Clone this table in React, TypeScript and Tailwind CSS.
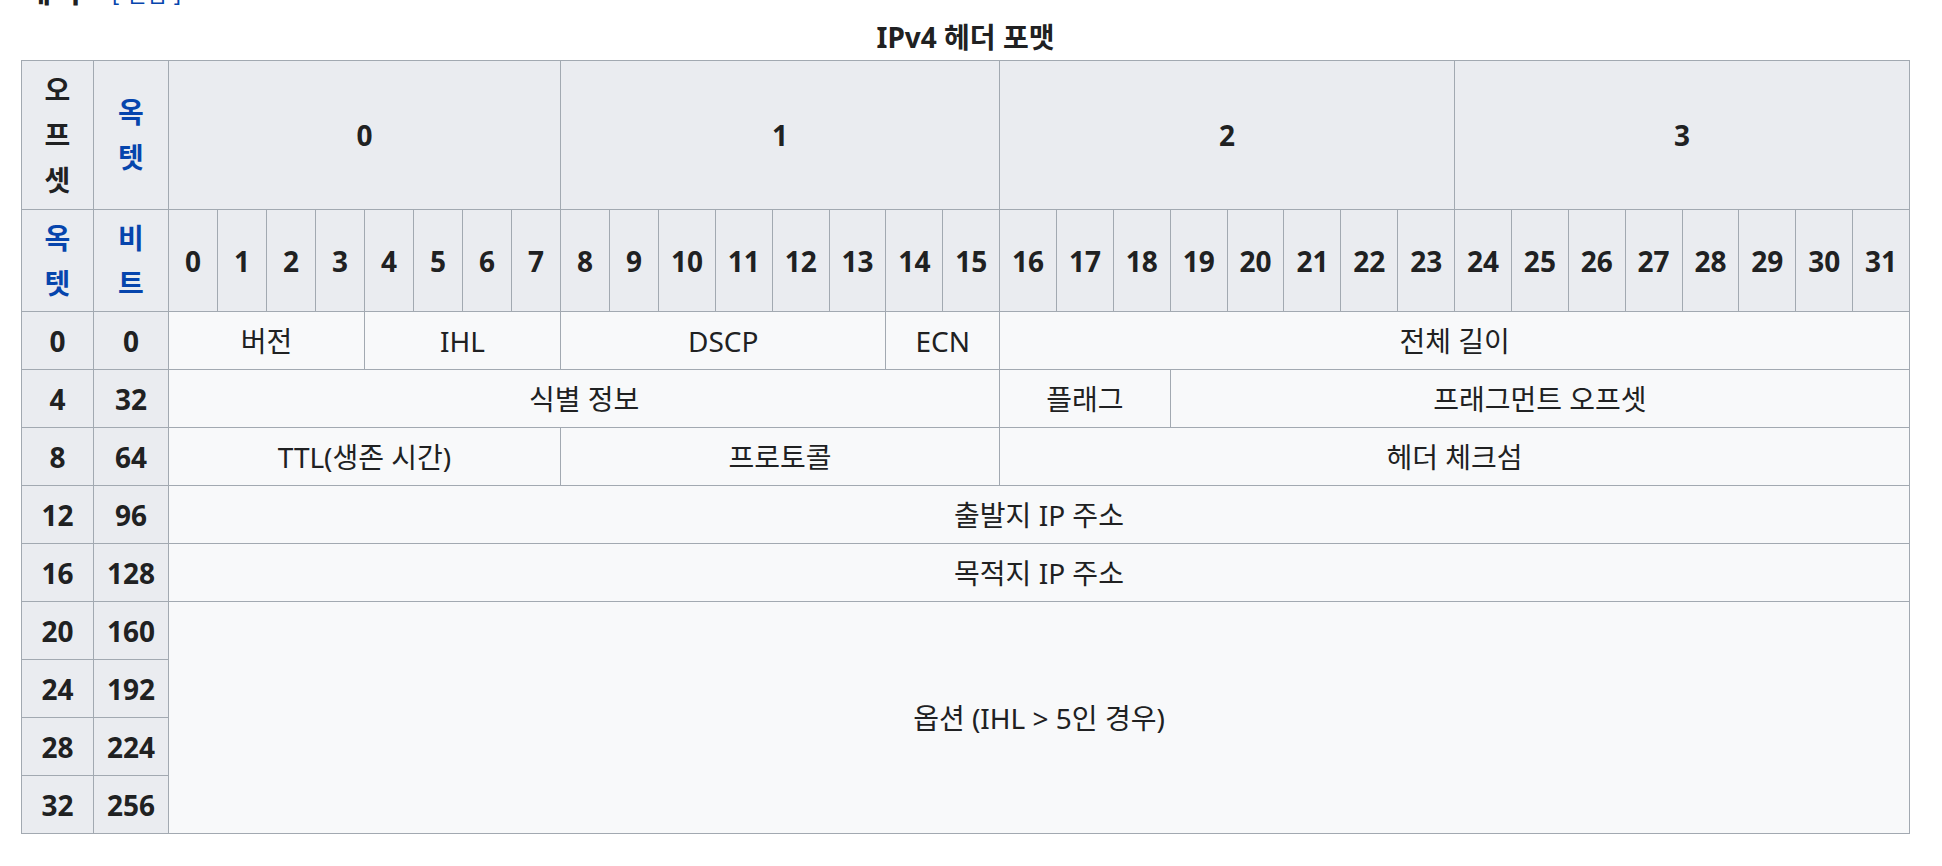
const FONT = "font-['Noto_Sans','Noto_Sans_CJK_KR',sans-serif]";

type Field = { label: string; span: string };

const dataRows: { octet: string; bit: string; fields: Field[] }[] = [
  {
    octet: "0",
    bit: "0",
    fields: [
      { label: "버전", span: "col-span-4" },
      { label: "IHL", span: "col-span-4" },
      { label: "DSCP", span: "col-span-6" },
      { label: "ECN", span: "col-span-2" },
      { label: "전체 길이", span: "col-span-16" },
    ],
  },
  {
    octet: "4",
    bit: "32",
    fields: [
      { label: "식별 정보", span: "col-span-16" },
      { label: "플래그", span: "col-span-3" },
      { label: "프래그먼트 오프셋", span: "col-span-13" },
    ],
  },
  {
    octet: "8",
    bit: "64",
    fields: [
      { label: "TTL(생존 시간)", span: "col-span-8" },
      { label: "프로토콜", span: "col-span-8" },
      { label: "헤더 체크섬", span: "col-span-16" },
    ],
  },
  { octet: "12", bit: "96", fields: [{ label: "출발지 IP 주소", span: "col-span-32" }] },
  { octet: "16", bit: "128", fields: [{ label: "목적지 IP 주소", span: "col-span-32" }] },
];

const optionRows = [
  { octet: "20", bit: "160" },
  { octet: "24", bit: "192" },
  { octet: "28", bit: "224" },
  { octet: "32", bit: "256" },
];

const bits = Array.from({ length: 32 }, (_, i) => i);

const Th = ({ children, className = "" }: { children: React.ReactNode; className?: string }) => (
  <div className={`flex items-center justify-center bg-[#eaecf0] font-bold ${className}`}>{children}</div>
);

const Td = ({ children, className = "" }: { children: React.ReactNode; className?: string }) => (
  <div className={`flex items-center justify-center bg-[#f8f9fa] ${className}`}>{children}</div>
);

// 글자를 세로로 쌓은 헤더
const Stack = ({ chars, link }: { chars: string[]; link?: boolean }) => (
  <div className={`flex flex-col items-center leading-[45px] ${link ? "text-[#0645ad]" : ""}`}>
    {chars.map((c, i) => (
      <span key={i}>{c}</span>
    ))}
  </div>
);

export default function App() {
  return (
    <div className={`min-h-screen bg-white text-[#202122] ${FONT}`}>
      {/* 섹션 제목 (위쪽이 잘려 보임) */}
      <div className="-mt-[30px] ml-[22px] flex h-[40px] items-baseline leading-[40px]">
        <span className="text-[32px] font-bold">헤더</span>
        <span className="ml-[31px] text-[22px] text-[#0645ad]">
          [<span className="mx-[7px]">편집</span>]
        </span>
      </div>

      <div className="mt-[5px] ml-[21px] w-[1889px] text-center text-[28px] font-bold leading-[45px]">
        IPv4 헤더 포맷
      </div>

      <div className="ml-[21px] grid w-[1889px] grid-cols-[71px_74px_repeat(10,48px)_repeat(22,minmax(0,1fr))] grid-rows-[148px_101px_repeat(9,57px)] gap-px border border-[#a2a9b1] bg-[#a2a9b1] text-[28px]">
        <Th>
          <Stack chars={["오", "프", "셋"]} />
        </Th>
        <Th>
          <Stack chars={["옥", "텟"]} link />
        </Th>
        {["0", "1", "2", "3"].map((b) => (
          <Th key={b} className="col-span-8">
            {b}
          </Th>
        ))}

        <Th>
          <Stack chars={["옥", "텟"]} link />
        </Th>
        <Th>
          <Stack chars={["비", "트"]} link />
        </Th>
        {bits.map((b) => (
          <Th key={b}>{b}</Th>
        ))}

        {dataRows.map((row) => (
          <>
            <Th key={`o${row.octet}`}>{row.octet}</Th>
            <Th key={`b${row.bit}`}>{row.bit}</Th>
            {row.fields.map((f) => (
              <Td key={f.label} className={f.span}>
                {f.label}
              </Td>
            ))}
          </>
        ))}

        {optionRows.map((row, i) => (
          <>
            <Th key={`o${row.octet}`}>{row.octet}</Th>
            <Th key={`b${row.bit}`}>{row.bit}</Th>
            {i === 0 && <Td className="col-span-32 row-span-4">옵션 (IHL &gt; 5인 경우)</Td>}
          </>
        ))}
      </div>
    </div>
  );
}
